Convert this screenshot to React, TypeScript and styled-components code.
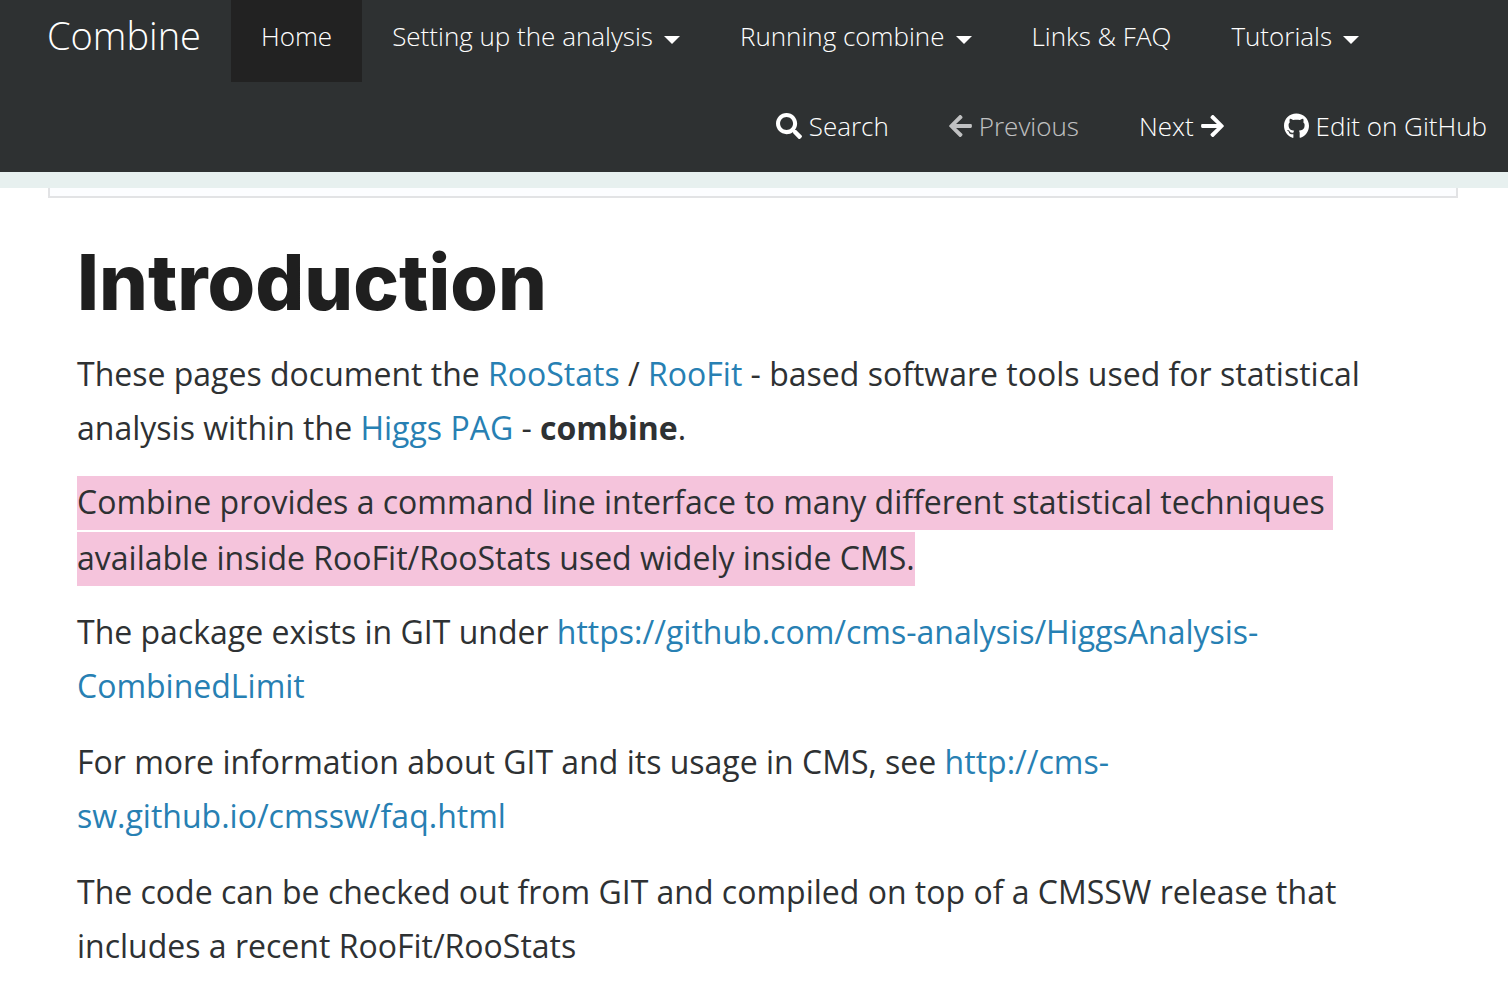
import React from "react";
import styled, { createGlobalStyle } from "styled-components";
import { FaArrowLeft, FaArrowRight, FaGithub, FaSearch } from "react-icons/fa";

const GlobalStyle = createGlobalStyle`
  * { box-sizing: border-box; }
  body {
    margin: 0;
    background: #ffffff;
    color: #2e3133;
    font-family: "Open Sans", sans-serif;
    font-size: 32px;
    line-height: 54px;
  }
`;

const Header = styled.header`
  background: #2e3132;
  border-bottom: 16px solid #e7f0ef;
  font-weight: 300;
`;

const MainNav = styled.nav`
  display: flex;
  align-items: flex-start;
  padding-left: 47px;
`;

const Brand = styled.a`
  margin-right: 30px;
  color: #ffffff;
  font-size: 38px;
  line-height: 70px;
  text-decoration: none;
`;

const NavList = styled.ul`
  display: flex;
  margin: 0;
  padding: 0;
  list-style: none;
`;

const ToolList = styled(NavList)`
  justify-content: flex-end;
  gap: 60px;
  margin-top: 8px;
  padding-right: 21px;
`;

const itemStyle = `
  display: flex;
  align-items: center;
  height: 82px;
  border: 0;
  padding: 0 0 10px;
  background: none;
  color: #ffffff;
  font-family: inherit;
  font-weight: 300;
  font-size: 26px;
  line-height: 36px;
  text-decoration: none;
  white-space: nowrap;
  cursor: pointer;
`;

const MenuLink = styled.a<{ $active?: boolean }>`
  ${itemStyle}
  padding: 0 30px 10px;
  background: ${(p) => (p.$active ? "#222222" : "transparent")};
`;

const MenuToggle = styled.button`
  ${itemStyle}
  padding: 0 30px 10px;
  gap: 11px;

  &::after {
    content: "";
    margin-top: 8px;
    border: 8px solid transparent;
    border-top-color: currentColor;
    border-bottom: 0;
  }
`;

const toolStyle = `
  ${itemStyle}
  gap: 7px;

  svg {
    width: 26px;
    height: 26px;
  }
`;

const ToolLink = styled.a<{ $disabled?: boolean; $arrow?: boolean }>`
  ${toolStyle}
  opacity: ${(p) => (p.$disabled ? 0.7 : 1)};

  svg {
    width: ${(p) => (p.$arrow ? 23 : 25)}px;
  }
`;

const ToolButton = styled.button`
  ${toolStyle}
`;

const Main = styled.main`
  padding: 0 50px 14px 48px;
`;

const ContentsBox = styled.div`
  height: 10px;
  border: 2px solid #e2e3e5;
  border-top: 0;
  background: #fcfdff;
`;

const Article = styled.article`
  padding: 35px 31px 0 29px;
`;

const Title = styled.h1`
  margin: 0 0 16px;
  color: #1f1f1f;
  font-family: Inter, sans-serif;
  font-weight: 800;
  font-size: 77px;
  line-height: 98px;
`;

const Paragraph = styled.p`
  margin: 0;

  & + & {
    margin-top: 22px;
  }
`;

const HighlightedParagraph = styled.p`
  margin: 19px 0;
  line-height: 56px;
  white-space: break-spaces;
`;

const Highlight = styled.mark`
  padding: 4px 0 7px;
  background: #f5c4dc;
  color: inherit;
`;

const Link = styled.a`
  color: #2780b3;
  text-decoration: none;
`;

export default function App() {
  return (
    <>
      <GlobalStyle />
      <Header>
        <MainNav aria-label="Main">
          <Brand href="#">Combine</Brand>
          <NavList>
            <li><MenuLink href="#" $active aria-current="page">Home</MenuLink></li>
            <li><MenuToggle type="button" aria-haspopup="true">Setting up the analysis</MenuToggle></li>
            <li><MenuToggle type="button" aria-haspopup="true">Running combine</MenuToggle></li>
            <li><MenuLink href="#">Links &amp; FAQ</MenuLink></li>
            <li><MenuToggle type="button" aria-haspopup="true">Tutorials</MenuToggle></li>
          </NavList>
        </MainNav>
        <ToolList>
          <li><ToolButton type="button"><FaSearch />Search</ToolButton></li>
          <li><ToolLink href="#" $arrow $disabled aria-disabled="true"><FaArrowLeft />Previous</ToolLink></li>
          <li><ToolLink href="#" $arrow>Next<FaArrowRight /></ToolLink></li>
          <li><ToolLink href="#"><FaGithub />Edit on GitHub</ToolLink></li>
        </ToolList>
      </Header>
      <Main>
        <ContentsBox />
        <Article>
          <Title>Introduction</Title>
          <Paragraph>
            These pages document the <Link href="#">RooStats</Link> / <Link href="#">RooFit</Link> - based
            software tools used for statistical analysis within the <Link href="#">Higgs PAG</Link> -{" "}
            <strong>combine</strong>.
          </Paragraph>
          <HighlightedParagraph>
            <Highlight>
              Combine provides a command line interface to many different statistical techniques available
              inside RooFit/RooStats used widely inside CMS.
            </Highlight>
          </HighlightedParagraph>
          <Paragraph>
            The package exists in GIT under{" "}
            <Link href="#">https://github.com/cms-analysis/HiggsAnalysis-CombinedLimit</Link>
          </Paragraph>
          <Paragraph>
            For more information about GIT and its usage in CMS, see{" "}
            <Link href="#">http://cms-sw.github.io/cmssw/faq.html</Link>
          </Paragraph>
          <Paragraph>
            The code can be checked out from GIT and compiled on top of a CMSSW release that includes a recent
            RooFit/RooStats
          </Paragraph>
        </Article>
      </Main>
    </>
  );
}
